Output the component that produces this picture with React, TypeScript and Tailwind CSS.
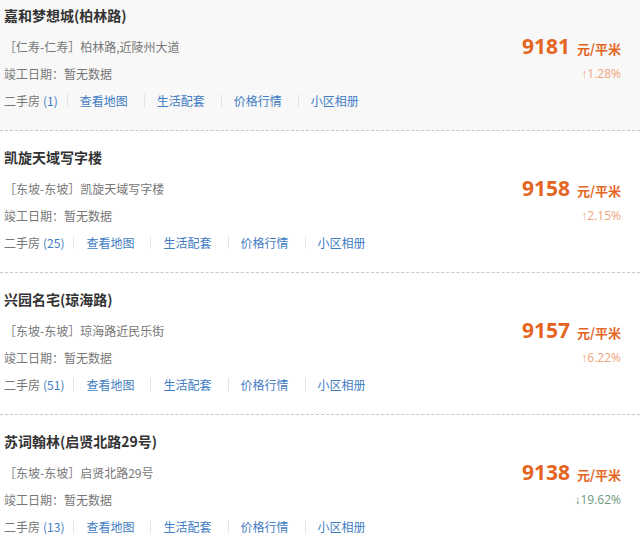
import React from "react";

type Item = {
  name: string;
  area: string;
  addr: string;
  count: number;
  price: number;
  change: string;
  up: boolean;
};

const ITEMS: Item[] = [
  { name: "嘉和梦想城(柏林路)", area: "仁寿-仁寿", addr: "柏林路,近陵州大道", count: 1, price: 9181, change: "1.28%", up: true },
  { name: "凯旋天域写字楼", area: "东坡-东坡", addr: "凯旋天域写字楼", count: 25, price: 9158, change: "2.15%", up: true },
  { name: "兴园名宅(琼海路)", area: "东坡-东坡", addr: "琼海路近民乐街", count: 51, price: 9157, change: "6.22%", up: true },
  { name: "苏词翰林(启贤北路29号)", area: "东坡-东坡", addr: "启贤北路29号", count: 13, price: 9138, change: "19.62%", up: false },
];

const LINKS = ["查看地图", "生活配套", "价格行情", "小区相册"];

const Sep = ({ first }: { first?: boolean }) => (
  <span className={first ? "ml-[9px] mr-[12px] h-[13px] w-px bg-[#e4e4e4]" : "ml-[16px] mr-[12px] h-[13px] w-px bg-[#e4e4e4]"} />
);

const Card = ({ item, idx }: { item: Item; idx: number }) => (
  <div
    className={
      idx === 0
        ? "bg-[#f8f8f8] pt-[14px] pb-[16px] pl-[4px] pr-[19px] border-b border-dashed border-[#c8c8c8]"
        : "bg-white pt-[14px] pb-[16px] pl-[4px] pr-[19px] border-b border-dashed border-[#c8c8c8]"
    }
  >
    {/* title */}
    <div className="h-[24px] flex items-center text-[14px] font-bold text-[#333]">{item.name}</div>
    {/* address + price */}
    <div className="mt-[7px] h-[26px] flex items-center justify-between">
      <div className="text-[12px] text-[#777]">
        ［{item.area}］{item.addr}
      </div>
      <div className="flex items-baseline text-[#e4651f] font-bold">
        <span className="text-[21px]" style={{ fontFamily: '"Open Sans", "Noto Sans", sans-serif' }}>
          {item.price}
        </span>
        <span className="ml-[7px] text-[13px]">元/平米</span>
      </div>
    </div>
    {/* date + change */}
    <div className="h-[27px] flex items-center justify-between">
      <div className="text-[12px] text-[#777]">竣工日期：暂无数据</div>
      <div
        className={item.up ? "text-[12px] text-[#f0a47a]" : "text-[12px] text-[#6e9a7e]"}
        style={{ fontFamily: '"Open Sans", "Noto Sans", sans-serif' }}
      >
        {item.up ? "↑" : "↓"}
        {item.change}
      </div>
    </div>
    {/* links */}
    <div className="h-[27px] flex items-center text-[12px]">
      <span className="text-[#777]">二手房</span>
      <span className="ml-[3px] text-[#3f7cc2]">({item.count})</span>
      <Sep first />
      {LINKS.map((l, i) => (
        <React.Fragment key={l}>
          {i > 0 && <Sep />}
          <span className="text-[#3f7cc2]">{l}</span>
        </React.Fragment>
      ))}
    </div>
  </div>
);

export default function App() {
  return (
    <div
      className="w-[640px] h-[542px] overflow-hidden bg-white"
      style={{ fontFamily: '"Noto Sans CJK SC", "Noto Sans", sans-serif' }}
    >
      <div className="-mt-[11px]">
        {ITEMS.map((it, i) => (
          <Card key={it.name} item={it} idx={i} />
        ))}
      </div>
    </div>
  );
}
